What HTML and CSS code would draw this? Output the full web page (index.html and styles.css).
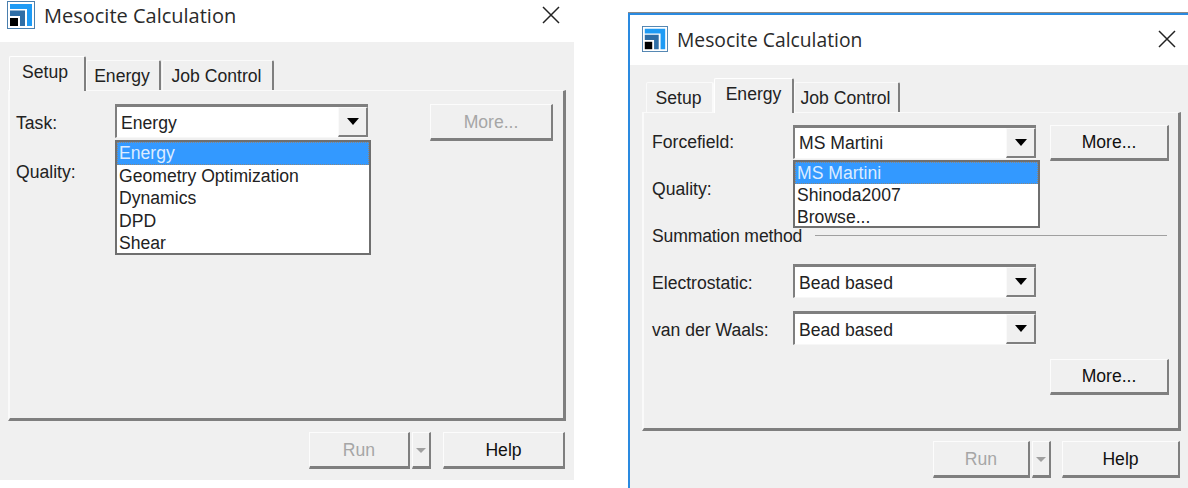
FILE: index.html
```html
<!DOCTYPE html>
<html lang="en">
<head>
  <meta charset="UTF-8">
  <title>Mesocite Calculation</title>
  <link rel="stylesheet" href="styles.css">
</head>
<body>
  <svg class="defs" width="0" height="0">
    <symbol id="app-icon" viewBox="0 0 28 28">
      <rect x="0.5" y="0.5" width="27" height="27" fill="#fff" stroke="#4a7fae"/>
      <path d="M3 3h22v22h-5V8H3z" fill="#1e9bf5"/>
      <path d="M3 9.5h15V25h-5V15H3z" fill="#2f6ea6"/>
      <rect x="3" y="17" width="8" height="8" fill="#000"/>
    </symbol>
    <symbol id="close-icon" viewBox="0 0 18 18">
      <path d="M1 1l16 16M17 1L1 17" fill="none" stroke="#222" stroke-width="1.5"/>
    </symbol>
  </svg>

  <!-- Setup tab with task list open -->
  <div class="window window-setup">
    <div class="titlebar">
      <svg class="app-icon"><use href="#app-icon"/></svg>
      <span class="title">Mesocite Calculation</span>
      <svg class="close"><use href="#close-icon"/></svg>
    </div>
    <div class="body">
      <div class="tabs">
        <div class="tab tab-active tab-setup">Setup</div>
        <div class="tab tab-energy">Energy</div>
        <div class="tab tab-job">Job Control</div>
      </div>
      <div class="panel">
        <div class="row">
          <label class="field-label">Task:</label>
          <div class="select"><span class="select-value">Energy</span><span class="select-arrow"></span></div>
          <button class="btn btn-more" disabled>More...</button>
        </div>
        <div class="field-label quality">Quality:</div>
        <ul class="popup">
          <li class="popup-selected">Energy</li>
          <li>Geometry Optimization</li>
          <li>Dynamics</li>
          <li>DPD</li>
          <li>Shear</li>
        </ul>
      </div>
      <div class="footer">
        <button class="btn btn-run" disabled>Run</button>
        <button class="btn btn-split" disabled><span class="split-arrow"></span></button>
        <button class="btn btn-help">Help</button>
      </div>
    </div>
  </div>

  <!-- Energy tab with forcefield list open -->
  <div class="window window-energy">
    <div class="titlebar">
      <svg class="app-icon"><use href="#app-icon"/></svg>
      <span class="title">Mesocite Calculation</span>
      <svg class="close"><use href="#close-icon"/></svg>
    </div>
    <div class="body">
      <div class="tabs">
        <div class="tab tab-setup">Setup</div>
        <div class="tab tab-active tab-energy">Energy</div>
        <div class="tab tab-job">Job Control</div>
      </div>
      <div class="panel">
        <div class="row">
          <label class="field-label">Forcefield:</label>
          <div class="select"><span class="select-value">MS Martini</span><span class="select-arrow"></span></div>
          <button class="btn btn-more">More...</button>
        </div>
        <div class="field-label quality">Quality:</div>
        <div class="group-title"><span>Summation method</span><span class="group-line"></span></div>
        <div class="row row-method">
          <label class="field-label">Electrostatic:</label>
          <div class="select"><span class="select-value">Bead based</span><span class="select-arrow"></span></div>
        </div>
        <div class="row row-method">
          <label class="field-label">van der Waals:</label>
          <div class="select"><span class="select-value">Bead based</span><span class="select-arrow"></span></div>
        </div>
        <div class="more-row"><button class="btn btn-more">More...</button></div>
        <ul class="popup">
          <li class="popup-selected">MS Martini</li>
          <li>Shinoda2007</li>
          <li>Browse...</li>
        </ul>
      </div>
      <div class="footer">
        <button class="btn btn-run" disabled>Run</button>
        <button class="btn btn-split" disabled><span class="split-arrow"></span></button>
        <button class="btn btn-help">Help</button>
      </div>
    </div>
  </div>
</body>
</html>
```

FILE: styles.css
```css
* {
  margin: 0;
  padding: 0;
  box-sizing: border-box;
}
body {
  font-family: "Liberation Sans", Arial, sans-serif;
  font-size: 17.6px;
  color: #222;
  background-color: #fff;
  display: flex;
  align-items: flex-start;
  height: 488px;
  overflow: hidden;
}
.defs {
  position: absolute;
}

/* windows */
.window {
  display: flex;
  flex-direction: column;
  flex: none;
  background-color: #fff;
}
.window-setup {
  width: 574px;
  height: 480px;
}
.window-energy {
  width: 560px;
  height: 475px;
  margin-left: 54px;
  margin-top: 13px;
  border-top: 2px solid #2a8ae0;
  border-left: 2px solid #2a8ae0;
  box-shadow: 0 -1px 0 #8a8a8a;
}
.titlebar {
  display: flex;
  align-items: center;
  flex: none;
}
.window-setup .titlebar {
  height: 42px;
  padding: 0 14px 12px 7px;
}
.window-energy .titlebar {
  height: 50px;
  padding: 0 12px 2px 12px;
}
.app-icon {
  width: 28px;
  height: 28px;
  flex: none;
}
.window-energy .app-icon {
  width: 26px;
  height: 26px;
}
.title {
  font-family: "Open Sans", sans-serif;
  font-size: 20px;
  margin-left: 9px;
  flex: 1;
  color: #2a2a2a;
}
.window-energy .title {
  font-size: 19.3px;
}
.close {
  width: 18px;
  height: 18px;
  flex: none;
}
.body {
  flex: 1;
  background-color: #f0f0f0;
  display: flex;
  flex-direction: column;
}
.window-setup .body {
  padding: 14px 8px 0 8px;
}
.window-energy .body {
  padding: 13px 7px 0 12px;
}

/* tabs */
.tabs {
  display: flex;
  align-items: flex-end;
  margin-bottom: -1px;
  position: relative;
  z-index: 1;
  height: 35px;
}
.tab {
  height: 30px;
  margin-bottom: 1px;
  padding-top: 5px;
  padding-right: 2px;
  text-align: center;
  background-color: #f0f0f0;
  border-top: 1px solid #fafafa;
  border-left: 1px solid #fafafa;
  border-right: 2px solid #7f7f7f;
  border-radius: 2px 2px 0 0;
}
.tab-active {
  height: 35px;
  margin-bottom: 0;
  padding-right: 0;
  border-top-color: #fff;
  border-left-color: #fff;
}
.window-setup .tab-setup { width: 77px; margin-left: 1px; padding-right: 4px; }
.window-setup .tab-energy { width: 75px; }
.window-setup .tab-job { width: 112px; margin-left: 1px; }
.window-energy .tab-setup { width: 68px; margin-left: 4px; border-right-color: #fafafa; }
.window-energy .tab-energy { width: 80px; }
.window-energy .tab-job { width: 106px; }

/* tab panel */
.panel {
  position: relative;
  background-color: #f0f0f0;
  border-top: 1px solid #fafafa;
  border-left: 2px solid #fafafa;
  border-right: 3px solid #7f7f7f;
  border-bottom: 3px solid #7f7f7f;
}
.window-setup .panel {
  height: 331px;
  padding: 13px 10px 0 6px;
}
.window-energy .panel {
  height: 319px;
  padding: 12px 9px 0 8px;
}
.row {
  display: flex;
  align-items: flex-start;
}
.field-label {
  display: block;
  line-height: 34px;
  flex: none;
}
.select {
  height: 34px;
  width: 253px;
  flex: none;
  display: flex;
  align-items: flex-start;
  justify-content: space-between;
  padding-left: 4px;
  background-color: #fff;
  border-top: 3px solid #7f7f7f;
  border-left: 2px solid #7f7f7f;
  border-bottom: 1px solid #f7f7f7;
}
.select-value {
  margin-top: 6px;
}
.window-energy .row:first-child .select-value {
  margin-top: 5px;
}
.select-arrow {
  width: 30px;
  height: 30px;
  background-color: #f0f0f0;
  border-right: 2px solid #7f7f7f;
  border-bottom: 2px solid #7f7f7f;
  border-top: 1px solid #fafafa;
  border-left: 1px solid #fafafa;
  position: relative;
}
.select-arrow::after {
  content: "";
  position: absolute;
  left: 8px;
  top: 10px;
  border-left: 6px solid transparent;
  border-right: 6px solid transparent;
  border-top: 7px solid #000;
}
.window-setup .row .field-label { width: 99px; line-height: 38px; }
.window-setup .select { margin-right: 62px; }
.window-setup .quality { margin-top: 13px; }
.window-energy .row .field-label { width: 141px; line-height: 34px; }
.window-energy .row-method .field-label { line-height: 38px; }
.window-energy .select { width: 243px; margin-right: 14px; }
.window-energy .quality { margin-top: 11px; }

.group-title {
  display: flex;
  align-items: center;
  margin-top: 19px;
  height: 22px;
  letter-spacing: -0.15px;
}
.group-line {
  flex: 1;
  height: 1px;
  margin-left: 13px;
  margin-right: 2px;
  margin-top: -2px;
  background-color: #a0a0a0;
}
.row-method {
  margin-top: 17px;
  height: 34px;
}
.row-method + .row-method {
  margin-top: 13px;
}
.more-row {
  display: flex;
  justify-content: flex-end;
  margin-top: 14px;
}

/* buttons */
.btn {
  font: inherit;
  color: #111;
  height: 37px;
  padding-top: 1px;
  background-color: #f0f0f0;
  border-top: 1px solid #fcfcfc;
  border-left: 1px solid #fcfcfc;
  border-right: 2px solid #7f7f7f;
  border-bottom: 3px solid #7f7f7f;
}
.btn:disabled {
  color: #a6a6a6;
}
.btn-more {
  width: 123px;
  flex: none;
}
.window-energy .btn-more {
  width: 119px;
  height: 36px;
}
.footer {
  display: flex;
  justify-content: flex-end;
  margin-top: 11px;
  padding-right: 1px;
}
.window-energy .footer {
  margin-top: 10px;
}
.btn-run {
  width: 101px;
}
.window-energy .btn-run {
  width: 97px;
}
.btn-split {
  width: 19px;
  margin-left: 2px;
  position: relative;
}
.split-arrow {
  position: absolute;
  left: 3px;
  top: 15px;
  border-left: 5px solid transparent;
  border-right: 5px solid transparent;
  border-top: 5px solid #a0a0a0;
}
.btn-help {
  width: 122px;
  margin-left: 12px;
}
.window-energy .btn-help {
  width: 118px;
  margin-left: 11px;
}

/* open dropdown list */
.popup {
  position: absolute;
  list-style: none;
  background-color: #fff;
  border: 2px solid #6f6f6f;
  line-height: 22.5px;
}
.window-setup .popup {
  left: 105px;
  top: 49px;
  width: 256px;
  height: 115px;
}
.window-energy .popup {
  left: 149px;
  top: 47px;
  width: 247px;
  height: 68px;
  line-height: 22px;
}
.popup li {
  padding-left: 2px;
  height: 22.5px;
}
.window-energy .popup li {
  height: 22px;
}
.popup-selected {
  color: #dcecff;
  background-color: #3399ff;
  outline: 1px dotted rgba(196, 122, 44, 0.6);
  outline-offset: -1px;
}
```
